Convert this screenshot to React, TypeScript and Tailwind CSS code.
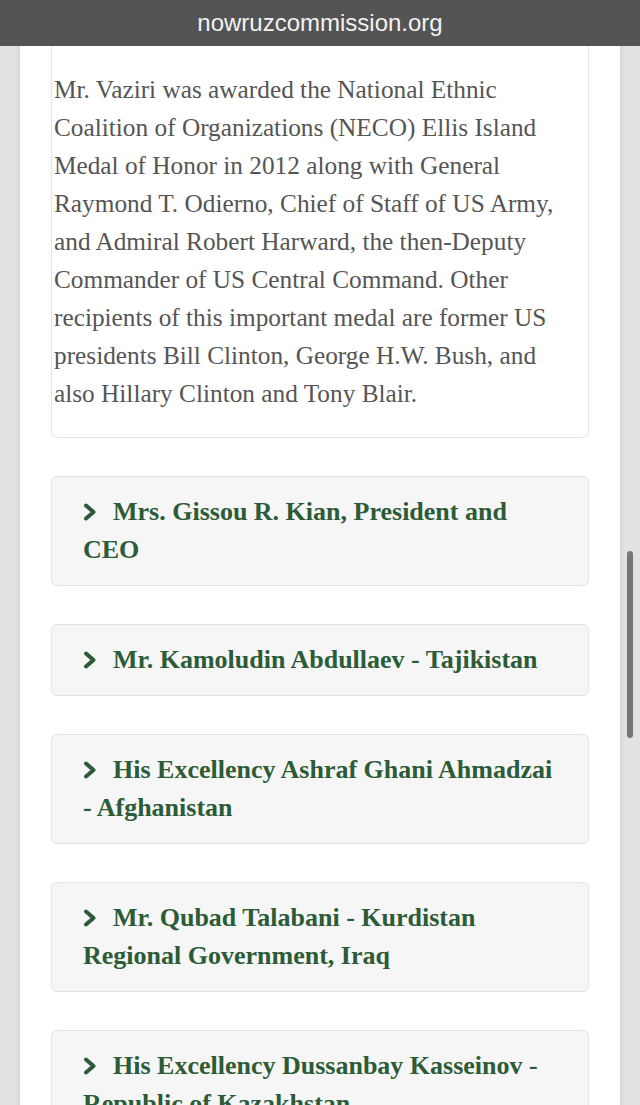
const people = [
  "Mrs. Gissou R. Kian, President and CEO",
  "Mr. Kamoludin Abdullaev - Tajikistan",
  "His Excellency Ashraf Ghani Ahmadzai - Afghanistan",
  "Mr. Qubad Talabani - Kurdistan Regional Government, Iraq",
  "His Excellency Dussanbay Kasseinov - Republic of Kazakhstan",
];

const serif = { fontFamily: '"Liberation Serif", "Times New Roman", serif' };

function Chevron() {
  return (
    <svg
      viewBox="0 0 14 18"
      className="inline-block w-[14px] h-[18px] mr-[16px] align-[-1px]"
    >
      <path
        d="M3 2.5 L10.5 9 L3 15.5"
        fill="none"
        stroke="#2c5b37"
        strokeWidth="4"
        strokeLinecap="round"
        strokeLinejoin="round"
      />
    </svg>
  );
}

export default function App() {
  return (
    <div className="relative h-[1105px] overflow-hidden bg-[#e2e2e2]">
      {/* address bar */}
      <div className="h-[46px] bg-[#545454] flex items-center justify-center relative z-10">
        <span
          className="text-[24px] text-[#f2f2f2] leading-none"
          style={{ fontFamily: '"Liberation Sans", Arial, sans-serif' }}
        >
          nowruzcommission.org
        </span>
      </div>

      <div className="mx-[20px] bg-white shadow-[0_0_4px_rgba(0,0,0,0.12)] px-[31px] min-h-[1100px]" style={serif}>
        {/* bio card */}
        <div className="border border-t-0 border-[#e3e3e3] rounded-b-[6px] pt-[24px] pb-[25px] pl-[2px] pr-[18px]">
          <p className="text-[25.3px] leading-[38px] text-[#555555]">
            Mr. Vaziri was awarded the National Ethnic Coalition of Organizations (NECO) Ellis Island
            Medal of Honor in 2012 along with General Raymond T. Odierno, Chief of Staff of US Army,
            and Admiral Robert Harward, the then-Deputy Commander of US Central Command. Other
            recipients of this important medal are former US presidents Bill Clinton, George H.W.
            Bush, and also Hillary Clinton and Tony Blair.
          </p>
        </div>

        {/* accordion */}
        <div className="flex flex-col gap-[38px] pt-[38px]">
          {people.map((name) => (
            <div
              key={name}
              className="bg-[#f6f6f6] border border-[#e3e3e3] rounded-[6px] px-[31px] py-4"
            >
              <h3 className="text-[26px] leading-[38px] font-bold text-[#2c5b37]">
                <Chevron />
                {name}
              </h3>
            </div>
          ))}
        </div>
      </div>

      {/* scrollbar */}
      <div className="absolute left-[627px] top-[551px] w-[6px] h-[187px] rounded-full bg-[#767676]" />
    </div>
  );
}
